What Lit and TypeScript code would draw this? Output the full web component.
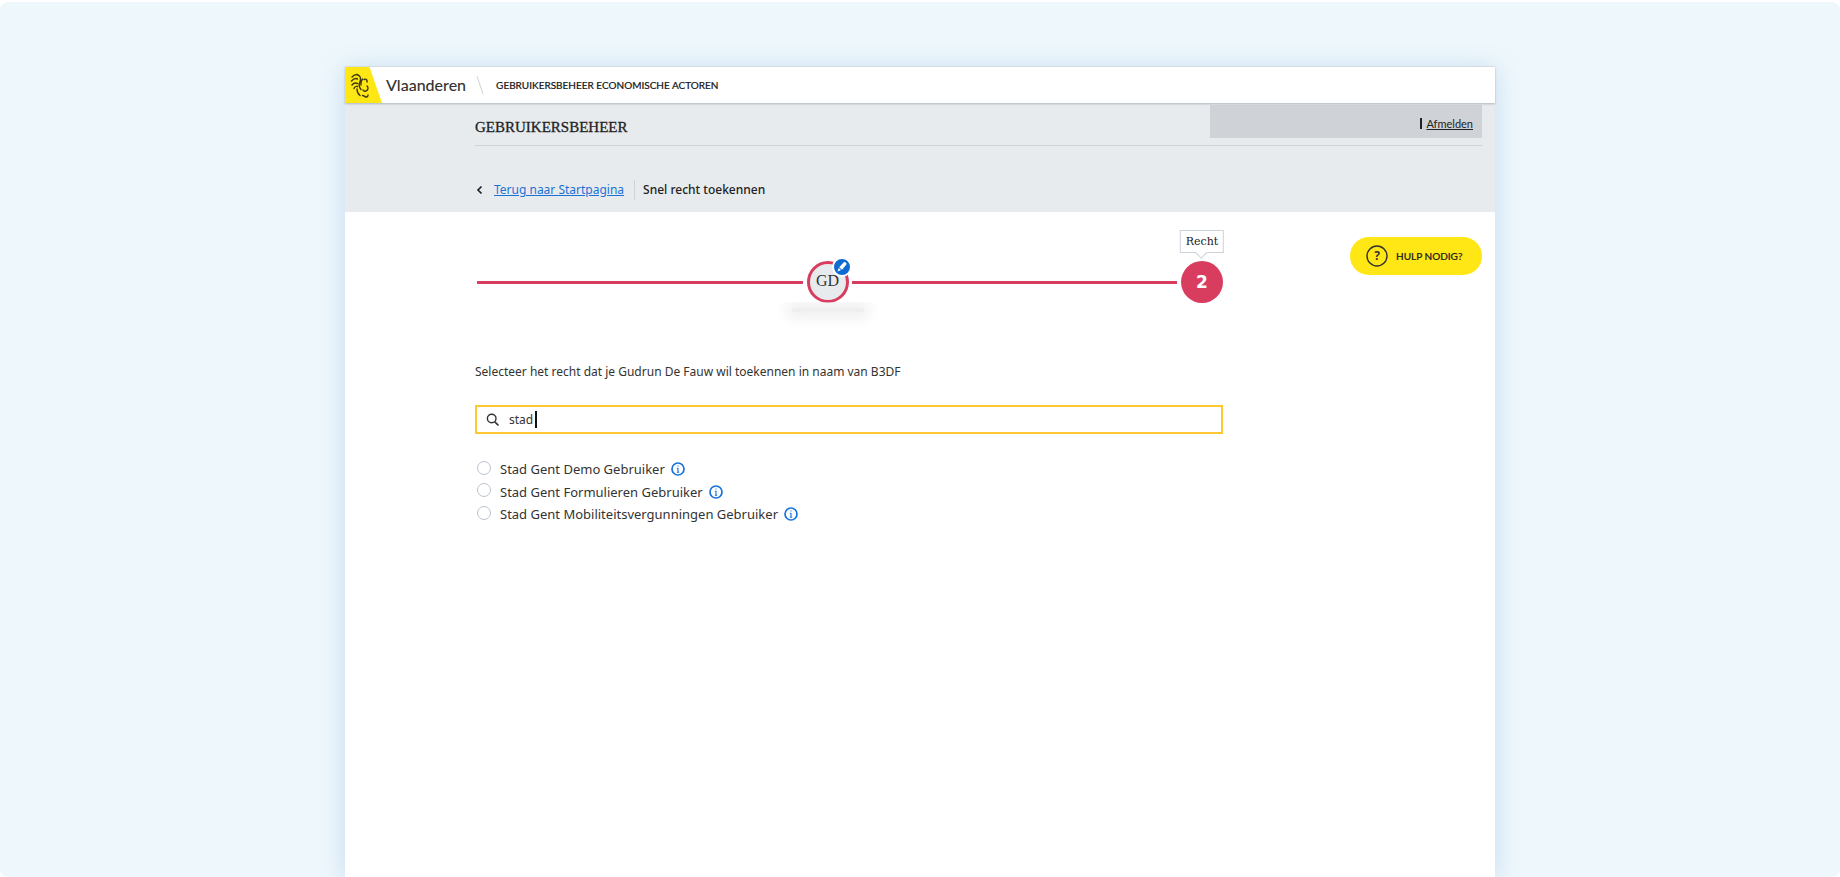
import { LitElement, html, css } from "lit";
import { customElement, state } from "lit/decorators.js";

@customElement("info-icon")
class InfoIcon extends LitElement {
  static styles = css`
    :host { display: block; width: 14px; height: 14px; }
    svg { display: block; }
  `;
  render() {
    return html`<svg width="14" height="14" viewBox="0 0 14 14" fill="none" stroke="#1673dc">
      <circle cx="7" cy="7" r="6" stroke-width="1.7" />
      <path d="M7 6v4.2M5.8 6.3h1.2M5.8 10.2h2.4M7 3.4v1.2" stroke-width="1.1" />
    </svg>`;
  }
}

@customElement("app-header")
class AppHeader extends LitElement {
  static styles = css`
    :host { display: block; position: relative; z-index: 1; background: #fff; box-shadow: 0 1px 2px #aeb6bd, 0 -1px 0 #d9dfe1; font-family: Lato, sans-serif; }
    .bar { display: flex; align-items: center; height: 36px; color: #333332; }
    .logo { display: block; width: 37px; height: 36px; }
    .brand { margin-left: 4px; font-size: 16px; line-height: 20px; font-weight: 500; color: #333332; text-decoration: none; }
    .slash { display: block; width: 8px; height: 20px; margin: 0 12px 0 10px; }
    .app { font-size: 10px; line-height: 16px; text-transform: uppercase; color: #111; -webkit-text-stroke: 0.2px #111; }
  `;
  render() {
    return html`<div class="bar">
      <svg class="logo" viewBox="0 0 37 36">
        <path d="M0 0h24.500l12.500 36H0z" fill="#ffe615" />
        <g fill="none" stroke="#3f3a12" stroke-width="1.4" stroke-linecap="round">
          <path d="M7 10c1.500-1.800 3-2.500 5-2.500M6.500 14c2-2.300 4-3 6-2M7 18c1.500-2 3.500-2.500 5.500-1.500M9 21.500c.5-1.500 2-2.500 3.500-2" />
          <path d="M12 7.500c3 1 4.500 3.500 3 7-1.500 3-1 5.500 1 8M17.500 12c-1.500 2-2 4-1.500 6M12 22c0 3 1 5 3 6.500" />
          <path d="M19 12.500c2-1 3.500.5 3 2.500M22 19c1.500 1.500 1.500 4-1 5-1.500.5-2.500 0-3-1M17.500 28.500c1.500.2 2 1 3 1.500 1.500.2 2.500-.5 2.500-2" />
        </g>
      </svg>
      <a class="brand" href="#">Vlaanderen</a>
      <svg class="slash" viewBox="0 0 8 20"><path d="M1 1l6 18" stroke="#cbd2da" fill="none" /></svg>
      <span class="app">Gebruikersbeheer economische actoren</span>
    </div>`;
  }
}

@customElement("page-banner")
class PageBanner extends LitElement {
  static styles = css`
    :host { display: block; background: #e8ebee; padding: 2px 13px 12px 130px; color: #222; }
    .top { display: flex; justify-content: space-between; height: 40px; border-bottom: 1px solid #cbd2da; }
    h1 { margin: 0; padding-top: 12px; font: 400 15px/20px "Liberation Serif", serif; -webkit-text-stroke: 0.3px #222; }
    .user { display: flex; align-items: center; justify-content: flex-end; gap: 4px; width: 27%; height: 33px; padding: 4px 9px 0 0; box-sizing: border-box; background: #cfd3d7; }
    .user::before { content: ""; width: 2px; height: 11px; background: #222; }
    .user a { color: #222; font: 400 11px/16px Lato, sans-serif; }
    nav { display: flex; align-items: center; height: 22px; margin-top: 33px; font-size: 12px; line-height: 16px; }
    :host { padding-bottom: 11px; }
    .chevron { width: 8px; height: 10px; margin: 0 10px 0 1px; }
    nav a { color: #1a72d6; }
    .current { margin-left: 10px; padding-left: 8px; line-height: 20px; font-weight: 500; border-left: 1px solid #cbd2da; }
  `;
  render() {
    return html`<div class="top">
        <h1>GEBRUIKERSBEHEER</h1>
        <div class="user"><a href="#">Afmelden</a></div>
      </div>
      <nav>
        <svg class="chevron" viewBox="0 0 8 10"><path d="M5.500 1.500L2 5l3.500 3.500" fill="none" stroke="#222" stroke-width="1.700" /></svg>
        <a href="#">Terug naar Startpagina</a>
        <span class="current">Snel recht toekennen</span>
      </nav>`;
  }
}

@customElement("step-bar")
class StepBar extends LitElement {
  static styles = css`
    :host { display: flex; align-items: center; padding-left: 2px; }
    .line { flex: 1; height: 3px; margin: 0 4px 0 0; background: #d83d60; }
    .step { position: relative; box-sizing: border-box; width: 42px; height: 42px; border-radius: 50%; display: grid; place-items: center; }
    .done { margin-right: 3px; padding-bottom: 2px; border: 3px solid #d83d60; background: #e8ebee; color: #333332; font: 400 16px/20px "Liberation Serif", serif; }
    .active { background: #d83d60; color: #fff; font: 700 17px/20px "DejaVu Sans", sans-serif; }
    .edit { position: absolute; top: -7px; right: -6px; width: 20px; height: 20px; padding: 0; border: 2px solid #fff; border-radius: 50%; background: #0f6ad3; display: grid; place-items: center; }
    .ghost { position: absolute; top: 38px; left: 50%; width: 112px; height: 28px; margin-left: -56px; overflow: hidden; }
    .ghost::before { content: ""; display: block; height: 4px; margin: 6px 20px; border-radius: 6px; box-shadow: 0 0 14px 6px #efefef; background: #efefef; }
    .tip { position: absolute; bottom: 50px; left: 50%; transform: translateX(-50%); padding: 1px 5px; border: 1px solid #cbd2da; background: #fff; color: #222; font: 400 11px/19px "DejaVu Serif", serif; }
    .tip::after { content: ""; position: absolute; left: 50%; bottom: -5px; width: 8px; height: 8px; margin-left: -5px; border: solid #cbd2da; border-width: 0 1px 1px 0; background: #fff; transform: rotate(45deg); }
  `;
  render() {
    return html`<span class="line"></span>
      <div class="step done">GD
        <button class="edit" aria-label="Wijzigen">
          <svg width="12" height="12" viewBox="0 0 12 12" fill="#fff"><path d="M7.800 1.200c1-.8 3.300 1 2.600 2.300L6 8.700 3.200 6.300zM2.700 7l2.300 2-3.500 1.400z" /></svg>
        </button>
        <span class="ghost"></span>
      </div>
      <span class="line"></span>
      <div class="step active">2<span class="tip">Recht</span></div>`;
  }
}

@customElement("app-root")
class AppRoot extends LitElement {
  @state() private query = "stad";
  private rights = ["Stad Gent Demo Gebruiker", "Stad Gent Formulieren Gebruiker", "Stad Gent Mobiliteitsvergunningen Gebruiker"];

  static styles = css`
    :host { display: block; box-sizing: border-box; min-height: 100vh; padding-top: 2px; background: #fff; font-family: "Noto Sans", sans-serif; color: #333332; }
    .stage { display: flex; justify-content: center; box-sizing: border-box; min-height: calc(100vh - 2px); padding-top: 65px; border-radius: 8px; background: #eef7fb; overflow: hidden; }
    .panel { width: 62.5%; background: #fff; box-shadow: 0 2px 24px #c3dbf2; }
    main { display: grid; grid-template-columns: 1fr auto; gap: 127px; padding: 25px 13px 40px 130px; align-items: start; }
    step-bar { margin-top: 24px; }
    .lead { margin: 60px 0 0; font-size: 12px; line-height: 18px; }
    .search { display: flex; align-items: center; box-sizing: border-box; height: 29px; margin-top: 24px; padding: 0 9px; border: 2px solid #ffc933; background: #fff; }
    .search svg { width: 14px; height: 14px; margin-right: 9px; }
    .search input { field-sizing: content; min-width: 12px; padding: 0; border: 0; outline: 0; background: none; font: 400 12px/18px "Noto Sans", sans-serif; color: #333332; }
    .caret { width: 2px; height: 17px; margin-left: 2px; background: #111; }
    .rights { margin: 24px 0 0; padding: 0; border: 0; }
    .right { display: flex; align-items: center; height: 22px; font-size: 13px; line-height: 22px; }
    .right:nth-child(2) { height: 23px; }
    .right input { appearance: none; box-sizing: border-box; width: 14px; height: 14px; margin: 0 9px 3px 2px; border: 1px solid #b9c3cf; border-radius: 50%; background: #fff; }
    .right input:checked { border: 4px solid #1673dc; }
    .right info-icon { margin-left: 6px; }
    .help { display: flex; align-items: center; gap: 8px; min-width: 132px; height: 38px; padding: 0 16px; border: 0; border-radius: 19px; background: #ffe615; color: #222; font: 500 10px/16px Lato, sans-serif; -webkit-text-stroke: 0.2px #222; }
    .help svg { width: 22px; height: 22px; }
    .mark { font: 700 12px "Noto Sans", sans-serif; stroke: none; -webkit-text-stroke: 0; }
  `;

  render() {
    return html`<div class="stage"><div class="panel">
      <app-header></app-header>
      <page-banner></page-banner>
      <main>
        <section>
          <step-bar></step-bar>
          <p class="lead">Selecteer het recht dat je Gudrun De Fauw wil toekennen in naam van B3DF</p>
          <label class="search">
            <svg viewBox="0 0 14 14" fill="none" stroke="#333332"><circle cx="5.700" cy="5.500" r="4.300" stroke-width="1.400" /><path d="M8.800 8.800l3.700 3.700" stroke-width="1.700" /></svg>
            <input type="text" aria-label="Zoek een recht" .value=${this.query} @input=${(e: Event) => (this.query = (e.target as HTMLInputElement).value)} />
            <span class="caret"></span>
          </label>
          <fieldset class="rights">
            ${this.rights.map((r) => html`<label class="right"><input type="radio" name="right" />${r}<info-icon></info-icon></label>`)}
          </fieldset>
        </section>
        <button class="help">
          <svg viewBox="0 0 22 22"><circle cx="11" cy="11" r="10" fill="none" stroke="#333332" stroke-width="1.400" /><text class="mark" x="11" y="15" text-anchor="middle" fill="#333332">?</text></svg>
          HULP NODIG?
        </button>
      </main>
    </div></div>`;
  }
}
